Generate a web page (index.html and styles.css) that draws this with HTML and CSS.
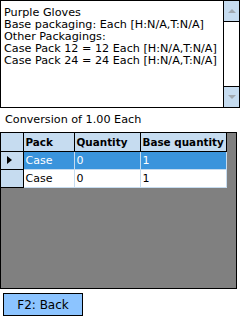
FILE: index.html
```html
<!DOCTYPE html>
<html lang="en">

<head>
    <meta charset="UTF-8">
    <meta name="viewport" content="width=device-width, initial-scale=1.0">
    <title>Conversion</title>
    <link rel="stylesheet" href="styles.css">
</head>

<body>
    <div class="memo">
        <div class="memoText">
            Purple Gloves<br>
            Base packaging: Each [H:N/A,T:N/A]<br>
            Other Packagings:<br>
            Case Pack 12 = 12 Each [H:N/A,T:N/A]<br>
            Case Pack 24 = 24 Each [H:N/A,T:N/A]
        </div>
        <div class="scroll">
            <div class="sbBtn"><span class="arrow up"></span></div>
            <div class="track"></div>
            <div class="sbBtn"><span class="arrow down"></span></div>
        </div>
    </div>

    <div class="caption">Conversion of 1.00 Each</div>

    <div class="grid">
        <table>
            <tr class="head">
                <th class="rowHead"></th>
                <th class="colPack">Pack</th>
                <th class="colQty">Quantity</th>
                <th class="colBase">Base quantity</th>
            </tr>
            <tr class="sel">
                <td class="rowHead"><span class="marker"></span></td>
                <td>Case</td>
                <td>0</td>
                <td>1</td>
            </tr>
            <tr>
                <td class="rowHead"></td>
                <td>Case</td>
                <td>0</td>
                <td>1</td>
            </tr>
        </table>
    </div>

    <div class="footer">
        <button class="backBtn">F2: Back</button>
    </div>
</body>

</html>
```

FILE: styles.css
```css
/* 초기화 */
* {
    box-sizing: border-box;
}

body {
    margin: 0;
    width: 240px;
    height: 320px;
    background: #fff;
    font-family: "DejaVu Sans", Tahoma, sans-serif;
    font-size: 11px;
    color: #000;
    overflow: hidden;
}

/* 상단 메모 */
.memo {
    display: flex;
    height: 108px;
    border: 1px solid #000;
}

.memoText {
    flex: 1;
    padding: 6px 0 0 3px;
    font-size: 11.2px;
    line-height: 12px;
    white-space: nowrap;
    overflow: hidden;
}

.scroll {
    width: 16px;
    display: flex;
    flex-direction: column;
    border-left: 1px solid #000;
}

.sbBtn {
    height: 20px;
    background: #c6dcf0;
    display: flex;
    align-items: center;
    justify-content: center;
}

.track {
    flex: 1;
    background: #fff;
    border-top: 1px solid #000;
    border-bottom: 1px solid #000;
}

.arrow {
    width: 0;
    height: 0;
    border-left: 4px solid transparent;
    border-right: 4px solid transparent;
}

.arrow.up {
    border-bottom: 4px solid #a0a8b0;
}

.arrow.down {
    border-top: 4px solid #a0a8b0;
}

/* 제목 */
.caption {
    padding: 5px 0 0 5px;
    height: 24px;
    font-size: 11.2px;
}

/* 그리드 */
.grid {
    height: 157px;
    width: 237px;
    background: #808080;
    border: 1px solid #000;
}

.grid table {
    border-collapse: collapse;
}

.grid th,
.grid td {
    height: 18px;
    padding: 0 0 0 2px;
    text-align: left;
    white-space: nowrap;
}

.grid th {
    background: #c6dcf0;
    border: 1px solid #000;
    border-top: 0;
    font-weight: bold;
    font-size: 10.4px;
}

.grid td {
    background: #fff;
    border: 1px solid #c6dcf0;
    border-top: 0;
}

.grid .rowHead {
    width: 22px;
    background: #c6dcf0;
    border-left: 0;
    border-right: 1px solid #000;
    border-bottom: 1px solid #000;
}

.colPack {
    width: 51px;
}

.colQty {
    width: 66px;
}

.colBase {
    width: 86px;
}

.grid tr.sel td {
    background: #3a94dc;
    color: #fff;
}

.grid tr.sel td.rowHead {
    background: #c6dcf0;
}

.marker {
    display: inline-block;
    margin-left: 4px;
    width: 0;
    height: 0;
    border-top: 4px solid transparent;
    border-bottom: 4px solid transparent;
    border-left: 5px solid #000;
}

/* 하단 버튼 */
.footer {
    padding: 4px 0 0 3px;
}

.backBtn {
    width: 80px;
    height: 23px;
    background: #8cc4ff;
    border: 1px solid #000;
    font-family: "DejaVu Sans", Tahoma, sans-serif;
    font-size: 12px;
    color: #000;
    padding: 0;
}
```
